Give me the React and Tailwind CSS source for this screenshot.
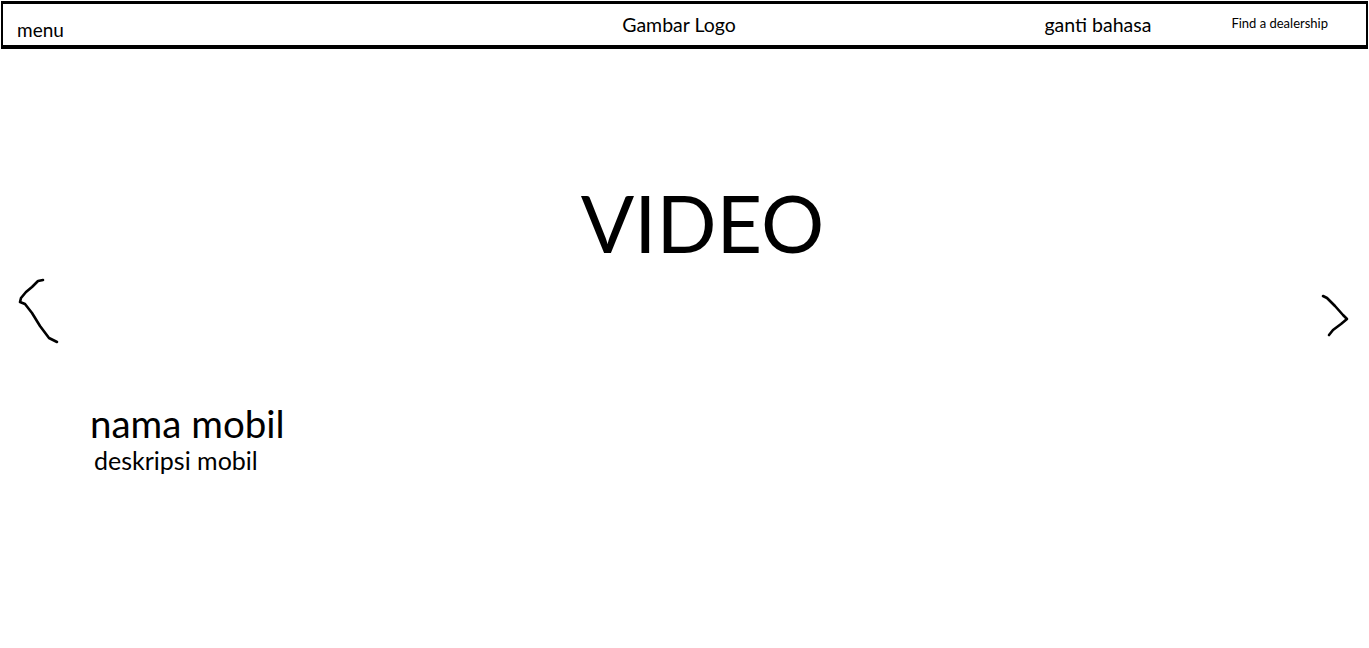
export default function App() {
  return (
    <div className="min-h-[648px] w-full bg-white text-black" style={{ fontFamily: 'Lato, "Open Sans", sans-serif' }}>
      <header className="mx-[1px] mt-[1px] flex h-[48px] items-center border-x-[2px] border-t-[3px] border-b-[4px] border-black pl-[14px] pr-[38px]">
        <span className="mt-[9px] w-[462px] text-[19px] leading-none">menu</span>
        <span className="w-[400px] text-center text-[19.5px] leading-none">Gambar Logo</span>
        <span className="ml-auto text-[19.5px] leading-none">ganti bahasa</span>
        <span className="ml-[80px] mb-[3px] text-[13px] leading-none">Find a dealership</span>
      </header>

      <section className="relative h-[599px]">
        <h1 className="pl-[36px] pt-[134px] text-center text-[79px] leading-none">VIDEO</h1>

        <button className="absolute left-[16px] top-[229px]" aria-label="previous">
          <svg width="44" height="66" viewBox="0 0 44 66" fill="none" stroke="black" strokeWidth="2.6" strokeLinecap="round" strokeLinejoin="round">
            <path d="M27 2 L22 3 L16 9 L10 14 L5 20 L4 24 L9 26 L16 35 L24 48 L33 60 L41 64" />
          </svg>
        </button>
        <button className="absolute right-[18px] top-[244px]" aria-label="next">
          <svg width="32" height="48" viewBox="0 0 32 48" fill="none" stroke="black" strokeWidth="2.6" strokeLinecap="round" strokeLinejoin="round">
            <path d="M4 3 L8 5 L16 13 L24 22 L28 26 L22 31 L14 37 L10 42" />
          </svg>
        </button>

        <div className="pl-[90px] pt-[142px]">
          <h2 className="text-[38.5px] leading-none">nama mobil</h2>
          <p className="ml-[4px] mt-[5px] text-[25px] leading-none">deskripsi mobil</p>
        </div>
      </section>
    </div>
  );
}
